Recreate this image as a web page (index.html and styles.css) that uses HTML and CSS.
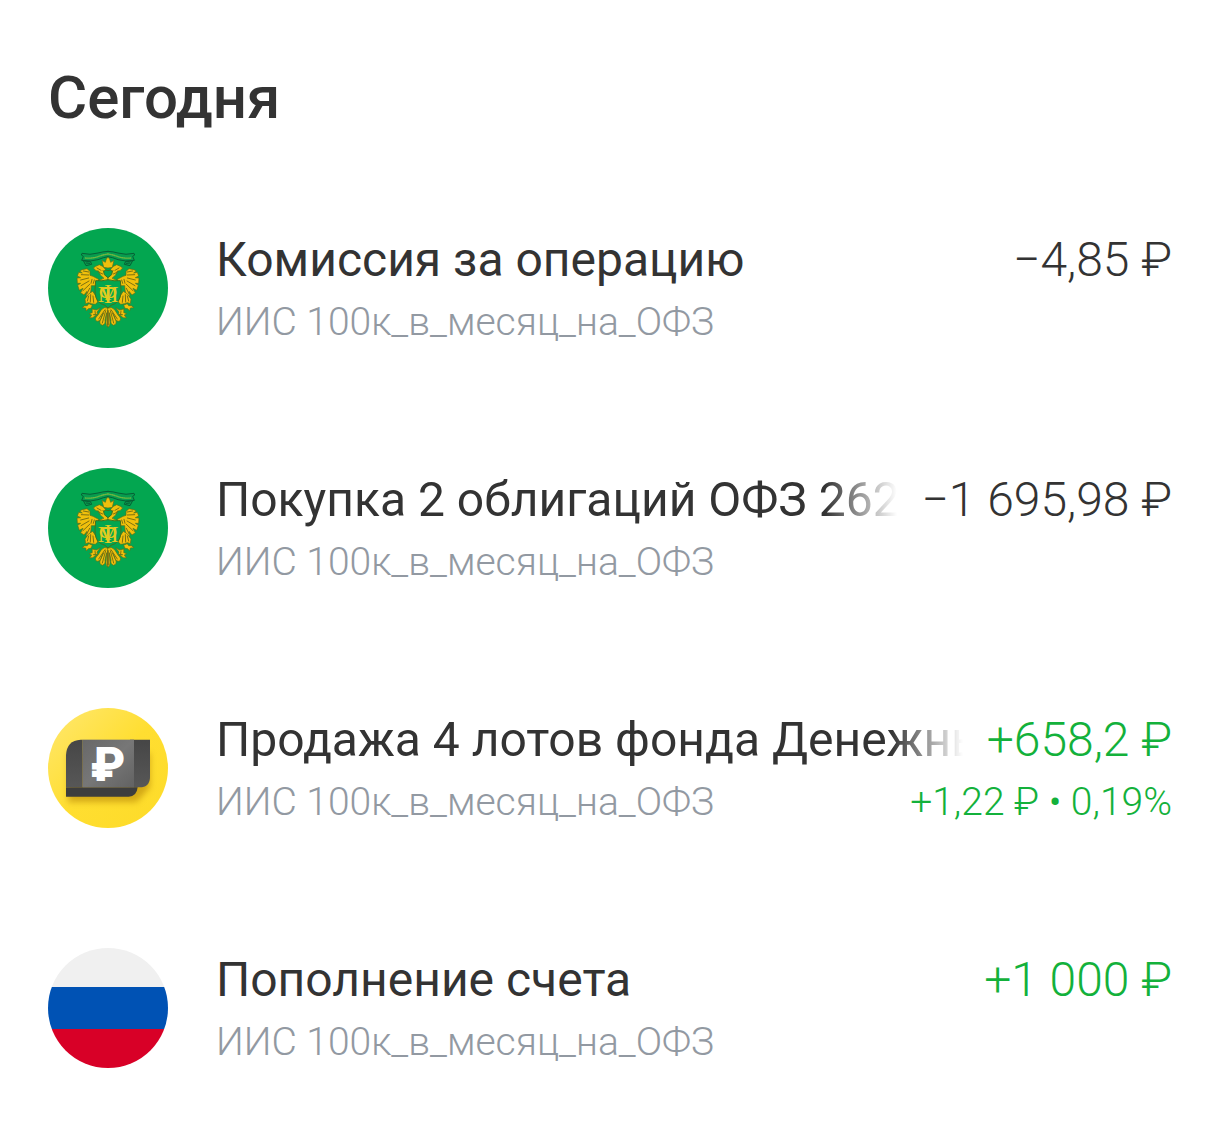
FILE: index.html
```
<!DOCTYPE html>
<html lang="ru">

<head>
  <meta charset="UTF-8">
  <meta name="viewport" content="width=device-width, initial-scale=1.0">
  <title>Операции</title>
  <link rel="stylesheet" href="styles.css">
</head>

<body>
  <svg class="defs" aria-hidden="true">
    <defs>
      <!-- left half of the eagle, mirrored below -->
      <g id="eagle-half" stroke-linejoin="round" stroke-linecap="round">
        <path class="ribbon" d="M204 94 Q188 95 174 99 Q150 106 126 100 L124 105 L130 109 L125 121 Q152 126 174 119 Q190 112 204 110" />
        <path class="ribbon" d="M130 122 L138 137 L155 133 L151 124 Q140 126 130 122 M139 129 L149 130" />
        <path class="ribbon-text" d="M136 114 Q158 116 176 109 Q190 104 204 102" />
        <path class="gold" d="M191 174 L181 165 L176 153 L168 152 L160 144 L167 139 L178 134 L190 140 L198 151 L204 158 L204 184 L168 186 Z" />
        <path class="gold" d="M176 178 L159 169 L150 166 L150 154 L141 146 L126 149 L119 153 L127 159 L116 157 L112 168 L122 173 L111 174 L112 190 L122 190 L113 196 L118 211 L129 205 L122 218 L132 225 L141 214 L138 228 L149 228 L153 210 L154 197 L167 197 Z" />
        <path class="feather" d="M146 156 L130 153 M146 165 L124 164 M146 174 L122 180 M147 183 L123 197 M149 193 L129 212 M149 205 L141 221 M156 178 L153 190 M163 180 L160 190" />
        <path class="gold" d="M147 221 L158 214 L168 228 L173 246 L166 253 L154 251 L145 248 L137 251 L135 238 Z" />
        <path class="feather" d="M146 228 L142 243 M152 224 L151 246 M159 228 L161 247" />
        <path class="gold" d="M147 251 L157 256 L153 265 L145 266 L139 273 L137 264 L126 263 L134 257 L141 257 Z" />
        <path class="gold" d="M157 267 L169 270 L181 263 L171 276 L173 283 L160 284 L169 286 L158 293 L149 294 L155 285 L148 281 L156 278 Z" />
        <path class="gold" d="M204 264 Q193 259 184 269 L174 285 Q160 298 171 304 Q184 302 184 290 L191 278 L181 300 Q176 312 187 316 Q198 312 195 300 L200 278 L198 307 Q197 318 204 321 Z" />
        <path class="feather" d="M195 269 L176 297 M197 272 L187 309 M203 272 L203 315 M165 273 L166 281" />
        <path class="feather" d="M171 144 L183 151 M175 156 L188 162 M189 151 L200 169" />
      </g>
      <symbol id="icon-minfin" viewBox="24 24 360 360">
        <circle cx="204" cy="204" r="180" fill="#03a650" />
        <use href="#eagle-half" />
        <use href="#eagle-half" transform="translate(408 0) scale(-1 1)" />
        <path class="gold" d="M191 142 L186 121 L196 127 L199 117 L204 112 L209 117 L212 127 L222 121 L217 142 Q204 146 191 142 Z" />
        <path class="shield" d="M191 154 Q198 147 204 152 Q211 147 217 154 L215 164 L204 173 L193 164 Z" />
        <path class="shield" d="M167 182 Q186 184 204 179 Q222 184 241 182 L243 207 Q245 239 225 251 Q212 254 204 264 Q196 254 183 251 Q163 239 165 207 Z" />
        <g class="monogram">
          <text x="204" y="245">М</text>
          <text x="204" y="239">Ф</text>
          <text x="204" y="250">Т</text>
        </g>
      </symbol>
      <linearGradient id="fund-bg" x1="0" y1="0" x2="1" y2="1">
        <stop offset="0" stop-color="#ffe871" />
        <stop offset="0.5" stop-color="#ffde31" />
        <stop offset="1" stop-color="#fddb28" />
      </linearGradient>
      <linearGradient id="note" x1="0" y1="0" x2="1" y2="1">
        <stop offset="0" stop-color="#686868" />
        <stop offset="0.5" stop-color="#777" />
        <stop offset="1" stop-color="#626262" />
      </linearGradient>
      <linearGradient id="note-side" x1="0" y1="0" x2="0" y2="1">
        <stop offset="0" stop-color="#464646" />
        <stop offset="1" stop-color="#575757" />
      </linearGradient>
      <filter id="note-shadow" x="-20%" y="-20%" width="140%" height="160%">
        <feGaussianBlur stdDeviation="9" />
      </filter>
      <clipPath id="round">
        <circle cx="60" cy="60" r="60" />
      </clipPath>
    </defs>
  </svg>

  <main class="history">
    <h1 class="history-title">Сегодня</h1>
    <ul class="operations">
      <li class="operation">
        <svg class="operation-icon" aria-hidden="true">
          <use href="#icon-minfin" />
        </svg>
        <div class="operation-body">
          <div class="line">
            <span class="name">Комиссия за операцию</span>
            <span class="amount">−4,85 ₽</span>
          </div>
          <div class="line line-small">
            <span class="account">ИИС 100к_в_месяц_на_ОФЗ</span>
          </div>
        </div>
      </li>
      <li class="operation">
        <svg class="operation-icon" aria-hidden="true">
          <use href="#icon-minfin" />
        </svg>
        <div class="operation-body">
          <div class="line">
            <span class="name name-fade">Покупка 2 облигаций ОФЗ 262</span>
            <span class="amount">−1 695,98 ₽</span>
          </div>
          <div class="line line-small">
            <span class="account">ИИС 100к_в_месяц_на_ОФЗ</span>
          </div>
        </div>
      </li>
      <li class="operation">
        <svg class="operation-icon" viewBox="24 24 360 360" aria-hidden="true">
          <circle cx="204" cy="204" r="180" fill="url(#fund-bg)" />
          <path d="M84 160 H330 V262 L290 306 H84 Z" fill="#a87500" opacity="0.5" filter="url(#note-shadow)" />
          <path d="M282 119 H330 V230 Q330 262 298 262 H270 V119 Z" fill="url(#note-side)" />
          <path d="M78 262 H293 Q290 290 266 290 H78 Z" fill="#3d3d3d" />
          <path d="M128 119 V262 H78 V166 Q80 121 122 119 Z" fill="url(#note-side)" />
          <rect x="128" y="119" width="154" height="143" fill="url(#note)" />
          <text class="ruble" x="204" y="243">₽</text>
        </svg>
        <div class="operation-body">
          <div class="line">
            <span class="name name-fade">Продажа 4 лотов фонда Денежны</span>
            <span class="amount income">+658,2 ₽</span>
          </div>
          <div class="line line-small">
            <span class="account">ИИС 100к_в_месяц_на_ОФЗ</span>
            <span class="yield income">+1,22 ₽ • 0,19%</span>
          </div>
        </div>
      </li>
      <li class="operation">
        <svg class="operation-icon" viewBox="0 0 120 120" aria-hidden="true">
          <g clip-path="url(#round)">
            <rect width="120" height="40" fill="#f0f0f0" />
            <rect y="39" width="120" height="42" fill="#0052b4" />
            <rect y="81" width="120" height="39" fill="#d80027" />
          </g>
        </svg>
        <div class="operation-body">
          <div class="line">
            <span class="name">Пополнение счета</span>
            <span class="amount income">+1 000 ₽</span>
          </div>
          <div class="line line-small">
            <span class="account">ИИС 100к_в_месяц_на_ОФЗ</span>
          </div>
        </div>
      </li>
    </ul>
  </main>
</body>

</html>
```
FILE: styles.css
```
body {
  margin: 0;
  background-color: #fff;
  color: #333;
  font-family: Roboto, "Noto Sans", sans-serif;
}

.defs {
  position: absolute;
  width: 0;
  height: 0;
}

.history {
  padding: 62px 48px 48px;
}

.history-title {
  margin: 0 0 94px;
  font-size: 60px;
  font-weight: 500;
  line-height: 72px;
}

.operations {
  display: flex;
  flex-direction: column;
  gap: 116px;
  margin: 0;
  padding: 0;
  list-style: none;
}

.operation {
  display: flex;
  align-items: flex-start;
  gap: 48px;
}

.operation-icon {
  flex: none;
  width: 120px;
  height: 120px;
}

.operation-body {
  flex: 1;
  min-width: 0;
}

.line {
  display: flex;
  justify-content: space-between;
  gap: 24px;
  font-size: 48px;
  font-weight: 400;
  line-height: 64px;
  white-space: nowrap;
}

.line-small {
  font-size: 39px;
  font-weight: 300;
  line-height: 60px;
}

.name {
  min-width: 0;
  overflow: hidden;
}

.name-fade {
  flex: 1;
  -webkit-mask-image: linear-gradient(to left, transparent, #000 72px);
  mask-image: linear-gradient(to left, transparent, #000 72px);
}

.amount {
  flex: none;
  font-weight: 300;
}

.account {
  color: #9299a2;
}

.income {
  color: #13b13b;
}

/* icons */
.gold {
  fill: #f0c00c;
  stroke: #5d6c16;
  stroke-width: 2;
}

.feather {
  fill: none;
  stroke: #7c7212;
  stroke-width: 3;
}

.ribbon {
  fill: #079c4e;
  stroke: #075f35;
  stroke-width: 3;
}

.ribbon-text {
  fill: none;
  stroke: #6fb63f;
  stroke-width: 4;
  stroke-dasharray: 3 3;
}

.shield {
  fill: #03a650;
  stroke: #42701b;
  stroke-width: 3;
}

.monogram {
  fill: #e3cb20;
  font-family: "Liberation Serif", serif;
  font-size: 70px;
  text-anchor: middle;
}

.ruble {
  fill: #fff;
  font-family: Roboto, sans-serif;
  font-size: 144px;
  font-weight: 900;
  text-anchor: middle;
}
```
